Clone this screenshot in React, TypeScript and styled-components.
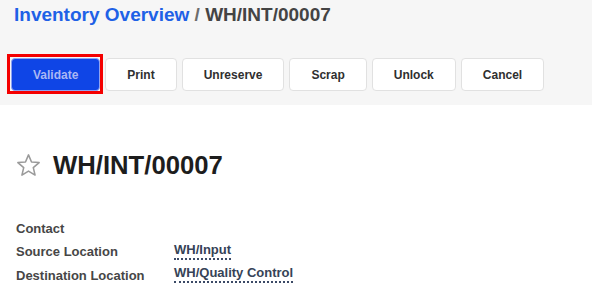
import React from "react";
import styled, { createGlobalStyle } from "styled-components";

const GlobalStyle = createGlobalStyle`
  body {
    margin: 0;
    background: #ffffff;
    font-family: "Liberation Sans", Arial, sans-serif;
  }
`;

const ControlPanel = styled.div`
  background: #f6f6f6;
  padding: 3px 14px 14px 11px;
  height: 105px;
  box-sizing: border-box;
`;

const Breadcrumb = styled.div`
  font-size: 19px;
  line-height: 24px;
  font-weight: 700;
  padding-left: 3px;
  color: #444444;
  a {
    color: #1e61e6;
    text-decoration: none;
  }
  span {
    color: #6c6c6c;
  }
`;

const ButtonRow = styled.div`
  display: flex;
  gap: 5px;
  margin-top: 31px;
`;

const ActionButton = styled.button<{ $primary?: boolean }>`
  position: relative;
  height: 33px;
  padding: 0 21px;
  border-radius: 4px;
  font-family: "Liberation Sans", Arial, sans-serif;
  font-size: 12px;
  font-weight: 700;
  border: 1px solid ${(p) => (p.$primary ? "#8ea3f2" : "#e1e1e1")};
  background: ${(p) => (p.$primary ? "#0f45e6" : "#ffffff")};
  color: ${(p) => (p.$primary ? "#aab7f3" : "#2f2f2f")};
  cursor: pointer;
`;

/* red highlight frame drawn over the primary button */
const HighlightFrame = styled.span`
  position: absolute;
  inset: -5px -4px -4px -5px;
  border: 3px solid #f40000;
  pointer-events: none;
`;

const Sheet = styled.div`
  padding: 45px 16px 0;
`;

const TitleRow = styled.div`
  display: flex;
  align-items: center;
  gap: 12px;
`;

const Title = styled.h1`
  margin: 0;
  font-size: 25.7px;
  line-height: 31px;
  font-weight: 700;
  color: #1d1d1d;
`;

const Fields = styled.div`
  margin-top: 40px;
  display: flex;
  flex-direction: column;
  gap: 5px;
`;

const FieldRow = styled.div`
  display: grid;
  grid-template-columns: 158px auto;
  align-items: start;
  justify-content: start;
`;

const Label = styled.div<{ $shift?: number }>`
  font-size: 13px;
  line-height: 16px;
  font-weight: 700;
  color: #464646;
  padding-top: ${(p) => p.$shift ?? 0}px;
`;

const Value = styled.div`
  font-size: 13px;
  line-height: 16px;
  font-weight: 700;
  color: #364357;
  border-bottom: 2px dotted #3b4a66;
`;

const Star = () => (
  <svg width="25" height="25" viewBox="0 0 24 24" fill="none">
    <polygon
      points="12,1.8 14.9,8.6 22.2,9.2 16.6,14 18.3,21.2 12,17.4 5.7,21.2 7.4,14 1.8,9.2 9.1,8.6"
      stroke="#9a9a9a"
      strokeWidth="1.5"
      strokeLinejoin="round"
    />
  </svg>
);

export default function App() {
  return (
    <>
      <GlobalStyle />
      <ControlPanel>
        <Breadcrumb>
          <a href="#">Inventory Overview</a> <span>/</span> WH/INT/00007
        </Breadcrumb>
        <ButtonRow>
          <ActionButton $primary>
            Validate
            <HighlightFrame />
          </ActionButton>
          <ActionButton>Print</ActionButton>
          <ActionButton>Unreserve</ActionButton>
          <ActionButton>Scrap</ActionButton>
          <ActionButton>Unlock</ActionButton>
          <ActionButton>Cancel</ActionButton>
        </ButtonRow>
      </ControlPanel>
      <Sheet>
        <TitleRow>
          <Star />
          <Title>WH/INT/00007</Title>
        </TitleRow>
        <Fields>
          <FieldRow>
            <Label>Contact</Label>
          </FieldRow>
          <FieldRow>
            <Label $shift={2}>Source Location</Label>
            <Value>WH/Input</Value>
          </FieldRow>
          <FieldRow>
            <Label $shift={3}>Destination Location</Label>
            <Value>WH/Quality Control</Value>
          </FieldRow>
        </Fields>
      </Sheet>
    </>
  );
}
